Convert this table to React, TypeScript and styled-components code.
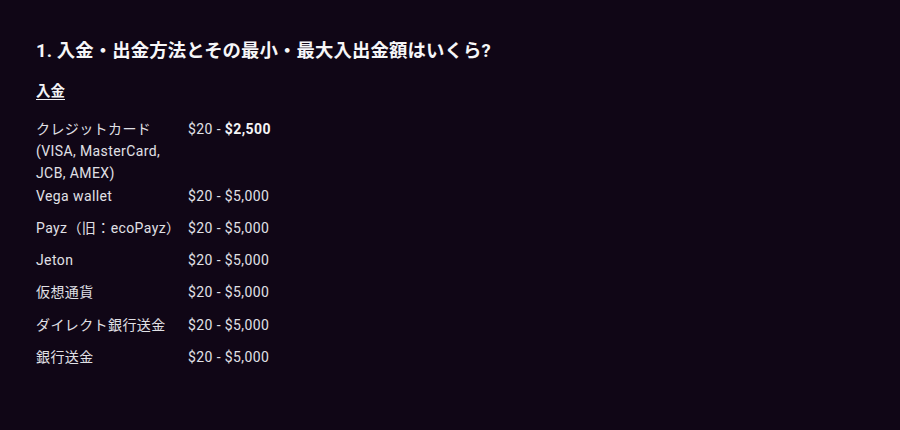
import React from "react";
import styled, { createGlobalStyle } from "styled-components";

const Global = createGlobalStyle`
  html, body { margin: 0; padding: 0; background: #100616; }
  body { font-family: Roboto, "Noto Sans CJK JP", sans-serif; }
`;

const Page = styled.div`
  width: 900px;
  height: 430px;
  box-sizing: border-box;
  padding: 35px 36px 0;
  background: #100616;
  color: #e0e0e6;
`;

const Title = styled.h2`
  margin: 0;
  font-size: 18.4px;
  line-height: 32px;
  font-weight: 700;
  color: #f6f6f8;
  letter-spacing: 0.1px;
`;

const SubTitle = styled.h3`
  margin: 14px 0 0;
  font-size: 14.5px;
  line-height: 22px;
  font-weight: 700;
  color: #f2f2f4;
  text-decoration: underline;
  text-underline-offset: 3px;
`;

const Table = styled.div`
  margin-top: 15px;
  display: flex;
  flex-direction: column;
  font-size: 14px;
  letter-spacing: 0.4px;
`;

const Row = styled.div<{ $pt: number; $pb: number }>`
  display: grid;
  grid-template-columns: 152px 1fr;
  align-items: start;
  padding: ${(p) => p.$pt}px 0 ${(p) => p.$pb}px;
  line-height: 22px;
`;

const Method = styled.div`
  max-width: 148px;
`;

const Range = styled.div``;

const Strong = styled.strong`
  font-weight: 700;
  color: #f4f4f6;
`;

const rows: { m: string; r: React.ReactNode; pt: number; pb: number }[] = [
  { m: "クレジットカード (VISA, MasterCard, JCB, AMEX)", r: <>$20 - <Strong>$2,500</Strong></>, pt: 0, pb: 1 },
  { m: "Vega wallet", r: "$20 - $5,000", pt: 0, pb: 5 },
  { m: "Payz（旧：ecoPayz）", r: "$20 - $5,000", pt: 5, pb: 5 },
  { m: "Jeton", r: "$20 - $5,000", pt: 5, pb: 5 },
  { m: "仮想通貨", r: "$20 - $5,000", pt: 5, pb: 5 },
  { m: "ダイレクト銀行送金", r: "$20 - $5,000", pt: 6, pb: 5 },
  { m: "銀行送金", r: "$20 - $5,000", pt: 5, pb: 5 },
];

export default function App() {
  return (
    <Page>
      <Global />
      <Title>1. 入金・出金方法とその最小・最大入出金額はいくら?</Title>
      <SubTitle>入金</SubTitle>
      <Table>
        {rows.map((row, i) => (
          <Row key={i} $pt={row.pt} $pb={row.pb}>
            <Method>{row.m}</Method>
            <Range>{row.r}</Range>
          </Row>
        ))}
      </Table>
    </Page>
  );
}
